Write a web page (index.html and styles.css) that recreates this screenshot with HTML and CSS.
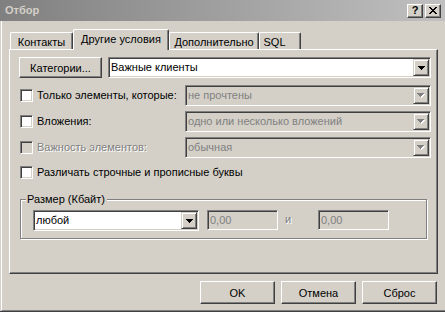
FILE: index.html
```html
<!DOCTYPE html>
<html lang="ru">
<head>
    <meta charset="UTF-8">
    <title>Отбор</title>
    <link rel="stylesheet" href="styles.css">
</head>
<body>
    <div class="window">
        <div class="titlebar">
            <span class="title">Отбор</span>
            <div class="caption-buttons">
                <span class="cap-btn">?</span>
                <span class="cap-btn">
                    <svg width="8" height="7" viewBox="0 0 8 7"><path d="M0 0h2v1H0zM6 0h2v1H6zM1 1h2v1H1zM5 1h2v1H5zM2 2h4v1H2zM3 3h2v1H3zM2 4h4v1H2zM1 5h2v1H1zM5 5h2v1H5zM0 6h2v1H0zM6 6h2v1H6z" fill="#000"/></svg>
                </span>
            </div>
        </div>

        <div class="client">
            <div class="tabs">
                <div class="tab tab-contacts">Контакты</div>
                <div class="tab tab-other active">Другие условия</div>
                <div class="tab tab-more">Дополнительно</div>
                <div class="tab tab-sql">SQL</div>
            </div>

            <div class="panel">
                <div class="row">
                    <button class="btn btn-categories">Категории...</button>
                    <div class="combo combo-wide">
                        <span class="combo-text">Важные клиенты</span>
                        <span class="drop"><svg width="7" height="4" viewBox="0 0 7 4"><path d="M0 0h7v1H0zM1 1h5v1H1zM2 2h3v1H2zM3 3h1v1H3z" fill="#000"/></svg></span>
                    </div>
                </div>

                <div class="row row-2">
                    <label class="check"><span class="box"></span>Только элементы, которые:</label>
                    <div class="combo combo-right disabled">
                        <span class="combo-text">не прочтены</span>
                        <span class="drop"><svg width="8" height="5" viewBox="0 0 8 5"><path d="M1 1h7v1H1zM2 2h5v1H2zM3 3h3v1H3zM4 4h1v1H4z" fill="#fff"/><path d="M0 0h7v1H0zM1 1h5v1H1zM2 2h3v1H2zM3 3h1v1H3z" fill="#808080"/></svg></span>
                    </div>
                </div>

                <div class="row row-next">
                    <label class="check"><span class="box"></span>Вложения:</label>
                    <div class="combo combo-right disabled">
                        <span class="combo-text">одно или несколько вложений</span>
                        <span class="drop"><svg width="8" height="5" viewBox="0 0 8 5"><path d="M1 1h7v1H1zM2 2h5v1H2zM3 3h3v1H3zM4 4h1v1H4z" fill="#fff"/><path d="M0 0h7v1H0zM1 1h5v1H1zM2 2h3v1H2zM3 3h1v1H3z" fill="#808080"/></svg></span>
                    </div>
                </div>

                <div class="row row-next">
                    <label class="check check-disabled"><span class="box"></span>Важность элементов:</label>
                    <div class="combo combo-right disabled">
                        <span class="combo-text">обычная</span>
                        <span class="drop"><svg width="8" height="5" viewBox="0 0 8 5"><path d="M1 1h7v1H1zM2 2h5v1H2zM3 3h3v1H3zM4 4h1v1H4z" fill="#fff"/><path d="M0 0h7v1H0zM1 1h5v1H1zM2 2h3v1H2zM3 3h1v1H3z" fill="#808080"/></svg></span>
                    </div>
                </div>

                <div class="row row-case">
                    <label class="check"><span class="box"></span>Различать строчные и прописные буквы</label>
                </div>

                <fieldset class="group">
                    <legend>Размер (Кбайт)</legend>
                    <div class="size-row">
                        <div class="combo combo-size">
                            <span class="combo-text">любой</span>
                            <span class="drop"><svg width="7" height="4" viewBox="0 0 7 4"><path d="M0 0h7v1H0zM1 1h5v1H1zM2 2h3v1H2zM3 3h1v1H3z" fill="#000"/></svg></span>
                        </div>
                        <div class="field disabled">0,00</div>
                        <span class="and">и</span>
                        <div class="field disabled">0,00</div>
                    </div>
                </fieldset>
            </div>

            <div class="buttons">
                <button class="btn dlg-btn">OK</button>
                <button class="btn dlg-btn">Отмена</button>
                <button class="btn dlg-btn">Сброс</button>
            </div>
        </div>
    </div>
</body>
</html>
```

FILE: styles.css
```css
* {
    margin: 0;
    padding: 0;
    box-sizing: border-box;
}

body {
    background-color: #d4d0c8;
    font-family: 'Liberation Sans', Arial, sans-serif;
    font-size: 11px;
    line-height: 13px;
    color: #000;
}

.window {
    width: 445px;
    height: 312px;
    display: flex;
    flex-direction: column;
    background-color: #d4d0c8;
    border-bottom: 1px solid #404040;
}

/* title bar (inactive) */
.titlebar {
    height: 21px;
    flex-shrink: 0;
    display: flex;
    align-items: center;
    justify-content: space-between;
    padding: 0 4px 0 5px;
    background: linear-gradient(to right, #808080, #c0c0c0);
}

.title {
    font-weight: bold;
    color: #d4d0c8;
}

.caption-buttons {
    display: flex;
    gap: 2px;
}

.cap-btn {
    width: 16px;
    height: 14px;
    display: flex;
    align-items: center;
    justify-content: center;
    background-color: #d4d0c8;
    border: 1px solid;
    border-color: #fff #404040 #404040 #fff;
    box-shadow: inset -1px -1px #808080;
    font-weight: bold;
    font-size: 11px;
}

.client {
    flex: 1;
    margin-left: 1px;
    border-left: 1px solid #fff;
    border-bottom: 1px solid #808080;
    padding: 8px 7px 0 7px;
}

/* tabs */
.tabs {
    display: flex;
    align-items: flex-end;
    height: 21px;
    margin: 0 0 -1px 1px;
    position: relative;
    z-index: 1;
}

.tab {
    height: 17px;
    margin-bottom: 1px;
    padding-top: 3px;
    text-align: center;
    white-space: nowrap;
    background-color: #d4d0c8;
    border: 1px solid;
    border-bottom: none;
    border-color: #fff #404040 #404040 #fff;
    border-radius: 2px 2px 0 0;
    box-shadow: inset -1px 0 #808080;
}

.tab.active {
    height: 21px;
    margin-bottom: 0;
}

.tab-contacts { width: 63px; }
.tab-other { width: 96px; }
.tab-more { width: 90px; }
.tab-sql { width: 42px; padding-right: 11px; }

.panel {
    height: 225px;
    border: 1px solid;
    border-color: #fff #404040 #404040 #fff;
    box-shadow: inset -1px -1px #808080;
    padding: 7px 6px 0 9px;
}

.row {
    display: flex;
    align-items: center;
    height: 21px;
}

.row-2 { margin-top: 7px; }
.row-next { margin-top: 5px; }
.row-case { margin-top: 4px; }

/* buttons */
.btn {
    font-family: inherit;
    font-size: 11px;
    color: #000;
    background-color: #d4d0c8;
    border: 1px solid;
    border-color: #fff #404040 #404040 #fff;
    box-shadow: inset -1px -1px #808080;
}

.btn-categories {
    width: 83px;
    height: 21px;
    margin-right: 6px;
}

/* combo boxes and fields */
.combo, .field {
    display: flex;
    align-items: center;
    background-color: #fff;
    border: 1px solid;
    border-color: #808080 #fff #fff #808080;
    box-shadow: inset 1px 1px #404040, inset -1px -1px #d4d0c8;
    padding: 1px;
}

.combo {
    height: 21px;
}

.combo-text {
    flex: 1;
    padding-left: 1px;
    white-space: nowrap;
}

.combo-wide { flex: 1; }

.combo-right {
    width: 246px;
    margin-left: auto;
}

.combo-size { width: 166px; }

.drop {
    width: 16px;
    height: 17px;
    display: flex;
    align-items: center;
    justify-content: center;
    background-color: #d4d0c8;
    border: 1px solid;
    border-color: #d4d0c8 #404040 #404040 #d4d0c8;
    box-shadow: inset 1px 1px #fff, inset -1px -1px #808080;
}

.disabled {
    background-color: #d4d0c8;
    color: #808080;
}

.field {
    width: 71px;
    height: 20px;
    padding-left: 2px;
}

/* checkboxes */
.check {
    display: flex;
    align-items: center;
    gap: 4px;
    margin-left: 1px;
    white-space: nowrap;
}

.box {
    width: 13px;
    height: 13px;
    background-color: #fff;
    border: 1px solid;
    border-color: #808080 #fff #fff #808080;
    box-shadow: inset 1px 1px #404040, inset -1px -1px #d4d0c8;
}

.check-disabled {
    color: #808080;
    text-shadow: 1px 1px #fff;
}

.check-disabled .box {
    background-color: #d4d0c8;
}

/* group box */
.group {
    margin: 10px 4px 0 1px;
    padding: 4px 11px 7px 12px;
    border: 1px solid #808080;
    box-shadow: inset 1px 1px #fff, 1px 1px #fff;
    min-width: 0;
}

.group legend {
    margin-left: -7px;
    padding: 0 2px 0 1px;
    background-color: #d4d0c8;
}

.size-row {
    display: flex;
    align-items: flex-start;
}

.size-row .combo-size {
    margin-right: 8px;
}

.and {
    width: 40px;
    padding: 3px 0 0 7px;
    color: #808080;
    text-shadow: 1px 1px #fff;
}

/* dialog buttons */
.buttons {
    display: flex;
    justify-content: flex-end;
    gap: 6px;
    margin-top: 7px;
    padding-right: 1px;
}

.dlg-btn {
    width: 75px;
    height: 23px;
}
```
